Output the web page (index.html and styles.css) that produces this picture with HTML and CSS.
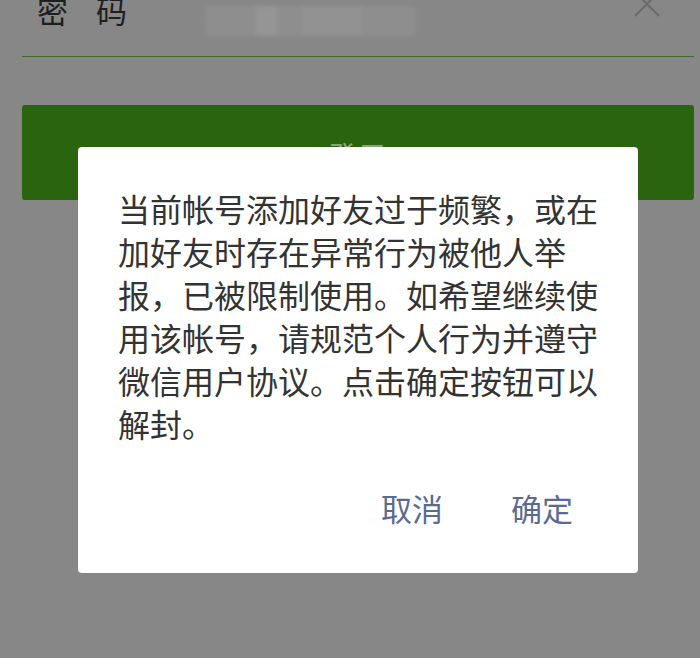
FILE: index.html
```html
<!DOCTYPE html>
<html lang="zh">
<head>
<meta charset="utf-8">
<link rel="stylesheet" href="styles.css">
</head>
<body>
<div class="page">
  <div class="field">
    <span class="label">密码</span>
    <div class="placeholder">
      <span class="blob b1"></span><span class="blob b2"></span><span class="blob b3"></span>
    </div>
    <svg class="clear" width="30" height="24" viewBox="0 0 30 24"><path d="M3 -4 L27 20 M27 -4 L3 20" stroke="#6a6a6a" stroke-width="2" fill="none"/></svg>
  </div>
  <div class="line"></div>
  <div class="login"><span class="login-text">登录</span></div>
</div>
<div class="dialog">
  <p class="msg">当前帐号添加好友过于频繁，或在加好友时存在异常行为被他人举报，已被限制使用。如希望继续使用该帐号，请规范个人行为并遵守微信用户协议。点击确定按钮可以解封。</p>
  <div class="actions">
    <span class="btn">取消</span>
    <span class="btn">确定</span>
  </div>
</div>
</body>
</html>
```
FILE: styles.css
```css
html, body {
  margin: 0;
  padding: 0;
  background: #878787;
  width: 700px;
  height: 658px;
  overflow: hidden;
  font-family: "Noto Sans CJK SC", "Noto Sans", sans-serif;
}
.page {
  padding: 0 6px 0 22px;
}
.field {
  display: flex;
  align-items: center;
  height: 56px;
  margin-top: -16px;
  position: relative;
}
.label {
  font-size: 31px;
  color: #1f1f1f;
  margin-left: 15px;
  width: 168px;
  line-height: 40px;
  margin-top: -4px;
  letter-spacing: 28px;
}
.placeholder {
  display: flex;
  height: 30px;
  width: 210px;
  background: #8e8e8e;
  filter: blur(2px);
  margin-top: 18px;
}
.blob { display: block; height: 30px; }
.b1 { width: 50px; background: #8e8e8e; }
.b2 { width: 22px; background: #959595; }
.b3 { width: 60px; background: #929292; margin-left: 25px; }
.clear {
  margin-left: auto;
  margin-right: 32px;
  margin-top: -8px;
}
.line {
  height: 1px;
  background: #3f6a2c;
  margin-top: 16px;
}
.login {
  margin-top: 48px;
  height: 95px;
  background: #2a640f;
  border-radius: 3px;
  display: flex;
  justify-content: center;
  padding-top: 30px;
  box-sizing: border-box;
}
.login-text {
  font-size: 30px;
  color: #8aa27d;
  line-height: 40px;
}
.dialog {
  position: absolute;
  left: 78px;
  top: 147px;
  width: 560px;
  height: 426px;
  background: #fff;
  border-radius: 4px;
  box-sizing: border-box;
  padding: 40px 40px 0 40px;
}
.msg {
  margin: 0;
  font-size: 32px;
  line-height: 43px;
  color: #333;
}
.actions {
  display: flex;
  justify-content: flex-end;
  gap: 68px;
  margin-top: 43px;
  padding-right: 25px;
}
.btn {
  font-size: 31px;
  line-height: 40px;
  color: #5a6b92;
}
```
